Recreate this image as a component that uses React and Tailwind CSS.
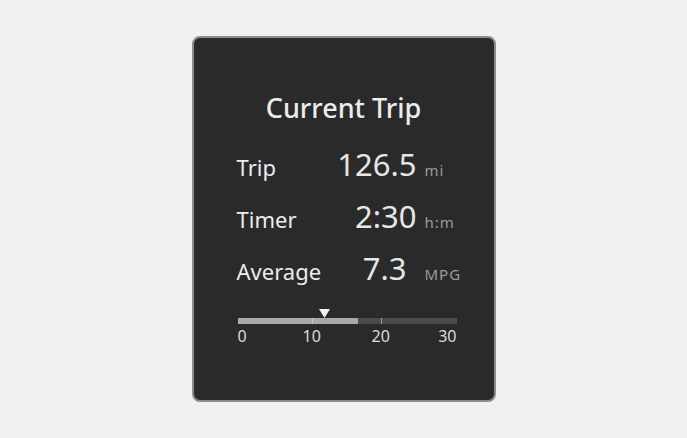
const rows = [
  { label: 'Trip', value: '126.5', unit: 'mi', pad: '' },
  { label: 'Timer', value: '2:30', unit: 'h:m', pad: '' },
  { label: 'Average', value: '7.3', unit: 'MPG', pad: 'pr-[10px]' },
];

function Scale() {
  return (
    <div className="ml-[2px] mt-[29px] w-[219px]">
      <div className="relative h-[10px]">
        <svg className="absolute left-[81px] top-[2px]" width="11" height="9" viewBox="0 0 11 9">
          <path d="M0 0 H11 L5.5 9 Z" fill="#f2f2f2" />
        </svg>
      </div>
      <div className="mt-[1px] flex h-[6px] w-full">
        <div className="relative h-full w-[120px] bg-[#a9a9a9]">
          <div className="absolute left-[74px] top-0 h-full w-px bg-[#c4c4c4]" />
        </div>
        <div className="relative h-full flex-1 bg-[#4b4b4b]">
          <div className="absolute left-[23px] top-0 h-full w-px bg-[#9a9a9a]" />
        </div>
      </div>
      <div className="relative mt-[3px] h-[18px] text-[16px] leading-[18px] text-[#dcdcdc]">
        <span className="absolute left-0">0</span>
        <span className="absolute left-[65px]">10</span>
        <span className="absolute left-[134px]">20</span>
        <span className="absolute right-0">30</span>
      </div>
    </div>
  );
}

export default function App() {
  return (
    <div className="flex h-[438px] w-full items-center justify-center bg-[#f2f1ef]" style={{ fontFamily: '"Noto Sans", Roboto, sans-serif' }}>
      <div className="flex h-[366px] w-[304px] flex-col rounded-[8px] border-2 border-[#8c8c8c] bg-[#2a2a2a] pl-[42px] pr-[32px] pt-[51px]">
        <h1 className="-ml-[10px] text-center text-[27px] font-medium leading-[37px] text-[#ececec]">Current Trip</h1>

        <div className="mt-[15px] flex flex-col gap-[19px]">
          {rows.map((r) => (
            <div key={r.label} className="flex h-[33px] items-baseline">
              <span className="w-[90px] pl-[1px] text-[22px] text-[#ececec]">{r.label}</span>
              <span className={`w-[91px] text-right text-[31px] text-[#e6e6e6] ${r.pad}`}>{r.value}</span>
              <span className="ml-[8px] text-[15px] tracking-[1px] text-[#9b9b9b]">{r.unit}</span>
            </div>
          ))}
        </div>

        <Scale />
      </div>
    </div>
  );
}
